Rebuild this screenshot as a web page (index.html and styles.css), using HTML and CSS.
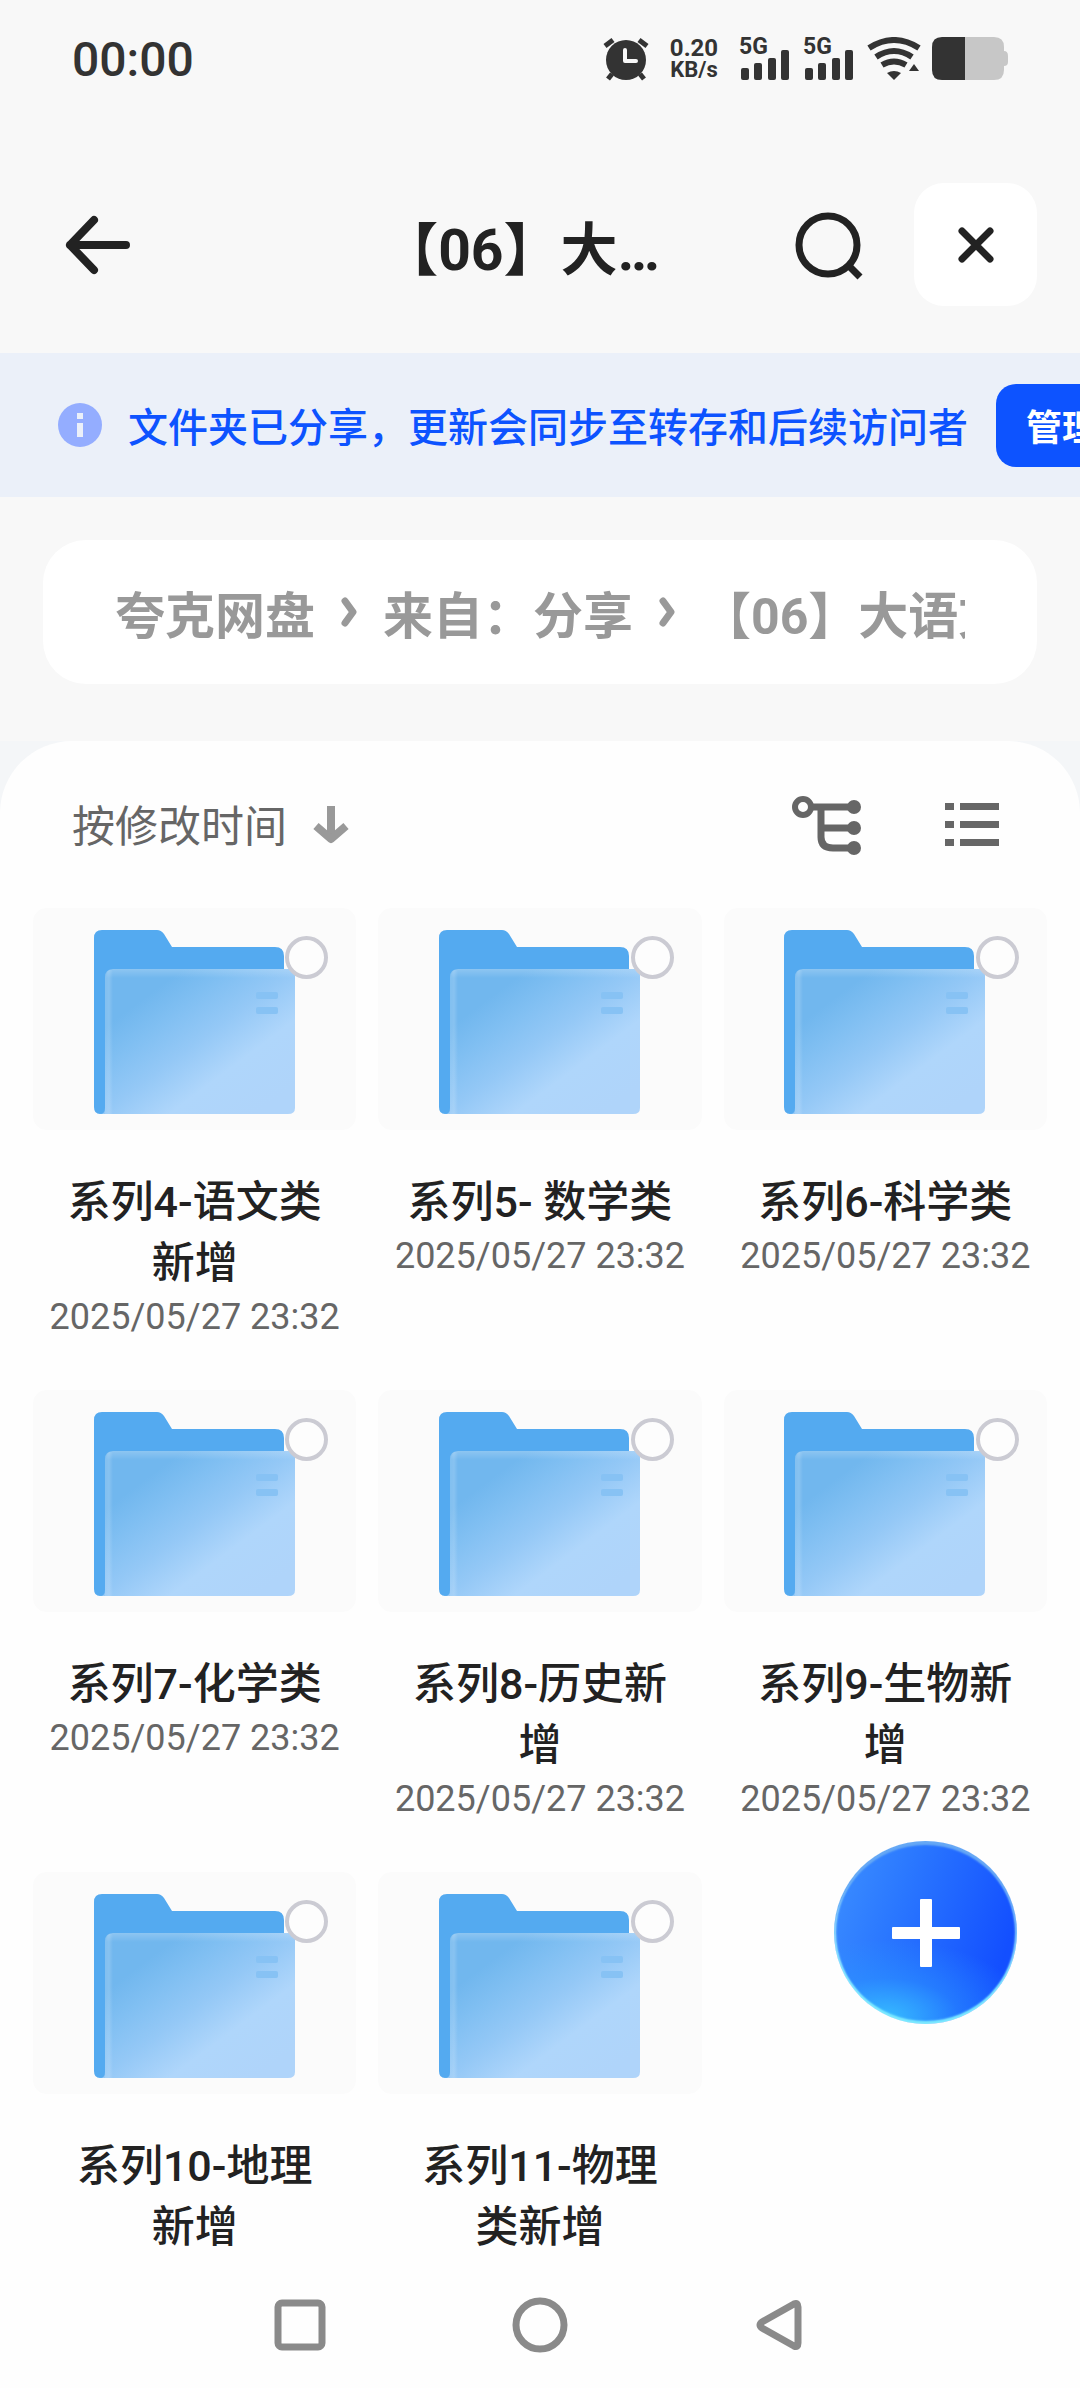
FILE: index.html
```html
<!DOCTYPE html>
<html lang="zh-CN">
<head>
<meta charset="utf-8">
<meta name="viewport" content="width=device-width, initial-scale=1">
<title>【06】大语文</title>
<link rel="stylesheet" href="styles.css">
</head>
<body>
<svg class="defs" aria-hidden="true">
  <defs>
    <linearGradient id="front" x1="0.1" y1="0.1" x2="0.9" y2="0.9">
      <stop offset="0.14" stop-color="#71b7ee"/>
      <stop offset="0.3" stop-color="#80bff2"/>
      <stop offset="0.5" stop-color="#94c8f6"/>
      <stop offset="0.72" stop-color="#afd6fb"/>
      <stop offset="1" stop-color="#afd4fa"/>
    </linearGradient>
    <linearGradient id="edge-x" x1="0" y1="0" x2="1" y2="0">
      <stop offset="0" stop-color="#fff" stop-opacity="0.12"/>
      <stop offset="0.5" stop-color="#fff" stop-opacity="0.16"/>
      <stop offset="1" stop-color="#fff" stop-opacity="0"/>
    </linearGradient>
    <linearGradient id="edge-y" x1="0" y1="0" x2="0" y2="1">
      <stop offset="0" stop-color="#fff" stop-opacity="0.2"/>
      <stop offset="1" stop-color="#fff" stop-opacity="0"/>
    </linearGradient>
    <symbol id="folder" viewBox="0 0 202 192">
      <path d="M0 9Q0 1 8 1H63Q67 1 70 5L78 18H181Q190 18 190 27V80H0Z" fill="#54aaf0"/>
      <path d="M19 40H201V179Q201 185 194 185H7V48Q11 40 19 40Z" fill="url(#front)"/>
      <path d="M11 48Q11 40 19 40V185H11Z" fill="url(#edge-x)"/>
      <path d="M19 40H201V49H12Q12 40 19 40Z" fill="url(#edge-y)"/>
      <path d="M0 40H19Q11 40 11 48V179Q11 185 6 185Q0 185 0 178Z" fill="#54aaf0"/>
      <rect x="162" y="63" width="22" height="7" rx="2" fill="#87c2f4"/>
      <rect x="162" y="78" width="22" height="7" rx="2" fill="#87c2f4"/>
    </symbol>
    <symbol id="chevron" viewBox="0 0 16 30">
      <path d="M4 4L12 15L4 26" fill="none" stroke="#999" stroke-width="7" stroke-linecap="round" stroke-linejoin="round"/>
    </symbol>
    <symbol id="signal" viewBox="0 0 50 32">
      <rect x="0" y="18" width="8" height="12" rx="2"/>
      <rect x="13" y="13" width="8" height="17" rx="2"/>
      <rect x="27" y="8" width="8" height="22" rx="2"/>
      <rect x="40" y="0" width="8" height="30" rx="2"/>
    </symbol>
  </defs>
</svg>
<div class="app">
  <div class="statusbar">
    <span class="clock">00:00</span>
    <svg class="alarm" width="46" height="44" viewBox="0 0 46 44" fill="#333">
      <circle cx="23" cy="23" r="20"/>
      <path d="M2 9L10 3M44 9L36 3" stroke="#333" stroke-width="5"/>
      <path d="M9 37L5 42M37 37L41 42" stroke="#333" stroke-width="5"/>
      <path d="M22 13V24H33" fill="none" stroke="#f8f8f8" stroke-width="4" stroke-linecap="round" stroke-linejoin="round"/>
    </svg>
    <span class="speed"><b>0.20</b><b class="unit">KB/s</b></span>
    <span class="cell"><b>5G</b><svg width="50" height="32"><use href="#signal"/></svg></span>
    <span class="cell"><b>5G</b><svg width="50" height="32"><use href="#signal"/></svg></span>
    <svg class="wifi" width="54" height="44" viewBox="0 0 54 44">
      <g fill="none" stroke="#333" stroke-width="6">
        <path d="M2 11Q27 -5 52 11"/>
        <path d="M9 20Q27 8 45 20"/>
        <path d="M15 28Q27 21 39 28"/>
      </g>
      <path d="M20 36Q27 32 34 36L27 43Z" fill="#333"/>
      <path d="M42 34L47 27L52 34Z" fill="#333"/>
    </svg>
    <svg class="battery" width="76" height="44" viewBox="0 0 76 44">
      <path d="M33 0H62Q72 0 72 10V14Q76 14 76 19V25Q76 29 72 29V33Q72 43 62 43H33Z" fill="#c7c7c7"/>
      <path d="M33 0H10Q0 0 0 10V33Q0 43 10 43H33Z" fill="#333"/>
    </svg>
  </div>

  <header class="header">
    <button class="icon-btn" aria-label="返回">
      <svg width="66" height="60" viewBox="0 0 66 60" fill="none" stroke="#222" stroke-width="8" stroke-linecap="round" stroke-linejoin="round"><path d="M29 5L5 30L29 55M5 30H61"/></svg>
    </button>
    <h1 class="title">【06】大…</h1>
    <button class="icon-btn" aria-label="搜索">
      <svg width="70" height="70" viewBox="0 0 70 70" fill="none" stroke="#222" stroke-width="7"><circle cx="34" cy="35" r="29"/><path d="M54 55L66 67"/></svg>
    </button>
    <button class="close" aria-label="关闭">
      <svg width="38" height="38" viewBox="0 0 38 38" fill="none" stroke="#222" stroke-width="7" stroke-linecap="round"><path d="M5 5L33 33M33 5L5 33"/></svg>
    </button>
  </header>

  <div class="banner">
    <svg class="info" width="44" height="44" viewBox="0 0 44 44"><circle cx="22" cy="22" r="22" fill="#94adff"/><path d="M19 10H25V16H19ZM19 20H25V34H19Z" fill="#ebf0f9"/></svg>
    <span class="banner-text">文件夹已分享，更新会同步至转存和后续访问者</span>
    <button class="manage">管理分享</button>
  </div>

  <nav class="crumbs" aria-label="路径">
    <div class="crumb-track">
      <a href="#">夸克网盘</a>
      <svg width="16" height="30"><use href="#chevron"/></svg>
      <a href="#">来自：分享</a>
      <svg width="16" height="30"><use href="#chevron"/></svg>
      <a href="#">【06】大语文</a>
    </div>
  </nav>

  <div class="backdrop">
  <main class="sheet">
    <div class="toolbar">
      <button class="sort">按修改时间
        <svg width="36" height="40" viewBox="0 0 36 40" fill="none" stroke="#999" stroke-width="8" stroke-linejoin="round"><path d="M18 1V34" /><path d="M3 21L18 34L33 21"/></svg>
      </button>
      <button class="icon-btn tree" aria-label="目录树">
        <svg width="70" height="60" viewBox="0 0 70 60" fill="none" stroke="#666" stroke-width="7"><circle cx="11" cy="12" r="8" stroke-width="6"/><path d="M20 12H62M29 12V42Q29 53 41 53H62M29 33H62"/><g fill="#666" stroke="none"><circle cx="62" cy="12" r="7"/><circle cx="62" cy="33" r="7"/><circle cx="62" cy="53" r="7"/></g></svg>
      </button>
      <button class="icon-btn" aria-label="列表视图">
        <svg width="54" height="44" viewBox="0 0 54 44" fill="#666"><path d="M0 0H9V7H0ZM15 0H54V7H15ZM0 18H9V25H0ZM15 18H54V25H15ZM0 36H9V43H0ZM15 36H54V43H15Z"/></svg>
      </button>
    </div>

    <ul class="grid">
      <li class="item"><div class="thumb"><svg class="folder"><use href="#folder"/></svg><input type="checkbox" aria-label="选择 系列4"></div><a class="name" href="#">系列4-语文类新增</a><time>2025/05/27 23:32</time></li>
      <li class="item"><div class="thumb"><svg class="folder"><use href="#folder"/></svg><input type="checkbox" aria-label="选择 系列5"></div><a class="name" href="#">系列5- 数学类</a><time>2025/05/27 23:32</time></li>
      <li class="item"><div class="thumb"><svg class="folder"><use href="#folder"/></svg><input type="checkbox" aria-label="选择 系列6"></div><a class="name" href="#">系列6-科学类</a><time>2025/05/27 23:32</time></li>
      <li class="item"><div class="thumb"><svg class="folder"><use href="#folder"/></svg><input type="checkbox" aria-label="选择 系列7"></div><a class="name" href="#">系列7-化学类</a><time>2025/05/27 23:32</time></li>
      <li class="item"><div class="thumb"><svg class="folder"><use href="#folder"/></svg><input type="checkbox" aria-label="选择 系列8"></div><a class="name" href="#">系列8-历史新增</a><time>2025/05/27 23:32</time></li>
      <li class="item"><div class="thumb"><svg class="folder"><use href="#folder"/></svg><input type="checkbox" aria-label="选择 系列9"></div><a class="name" href="#">系列9-生物新增</a><time>2025/05/27 23:32</time></li>
      <li class="item"><div class="thumb"><svg class="folder"><use href="#folder"/></svg><input type="checkbox" aria-label="选择 系列10"></div><a class="name" href="#">系列10-地理新增</a></li>
      <li class="item"><div class="thumb"><svg class="folder"><use href="#folder"/></svg><input type="checkbox" aria-label="选择 系列11"></div><a class="name" href="#">系列11-物理类新增</a></li>
    </ul>
  </main>
  </div>

  <footer class="navbar">
    <button class="icon-btn" aria-label="最近任务"><svg width="56" height="56" viewBox="0 0 56 56" fill="none" stroke="#8a8a8a" stroke-width="7"><rect x="6" y="6" width="44" height="44" rx="4"/></svg></button>
    <button class="icon-btn" aria-label="主页"><svg width="56" height="56" viewBox="0 0 56 56" fill="none" stroke="#8a8a8a" stroke-width="7"><circle cx="28" cy="28" r="24"/></svg></button>
    <button class="icon-btn" aria-label="返回"><svg width="56" height="56" viewBox="0 0 56 56" fill="none" stroke="#8a8a8a" stroke-width="7" stroke-linejoin="round"><path d="M42 7Q46 5 46 10V46Q46 51 42 49L10 31Q6 28 10 25Z"/></svg></button>
  </footer>

  <button class="fab" aria-label="新建"><svg width="68" height="68" viewBox="0 0 68 68" fill="#fff"><rect x="28" y="0" width="12" height="68" rx="1"/><rect x="0" y="28" width="68" height="12" rx="1"/></svg></button>
</div>
</body>
</html>
```

FILE: styles.css
```css
* { box-sizing: border-box; }

body {
  margin: 0;
  background: #f8f8f8;
  color: #222;
  font-family: Roboto, "Noto Sans CJK SC", sans-serif;
}

button {
  padding: 0;
  border: 0;
  background: none;
  color: inherit;
  font: inherit;
}

a { color: inherit; text-decoration: none; }
svg { display: block; flex: none; }
.defs { position: absolute; width: 0; height: 0; }

.app {
  position: relative;
  display: flex;
  flex-direction: column;
  height: 100vh;
  overflow: hidden;
}

/* status bar */
.statusbar {
  flex: none;
  display: flex;
  align-items: center;
  height: 118px;
  padding: 0 72px;
  color: #333;
}
.clock { margin-right: auto; font-size: 48px; font-weight: 500; }
.alarm { margin-right: 20px; }
.speed {
  display: flex;
  flex-direction: column;
  align-items: center;
  width: 50px;
  margin-right: 20px;
  font-size: 24px;
  line-height: 22px;
}
.speed b { font-weight: 700; }
.speed .unit { font-size: 22px; }
.cell { width: 64px; height: 44px; }
.cell b { display: block; height: 13px; font-size: 23px; line-height: 20px; }
.cell svg { margin-left: 2px; fill: #333; }
.wifi { margin-right: 11px; }

/* title bar */
.header {
  flex: none;
  display: flex;
  align-items: center;
  height: 235px;
  padding: 18px 43px 0 65px;
}
.title {
  flex: 1;
  margin: 0;
  padding: 12px 0 0 116px;
  font-size: 57px;
  font-weight: 700;
  line-height: 80px;
  text-align: center;
  white-space: nowrap;
}
.close {
  display: grid;
  place-items: center;
  width: 123px;
  height: 123px;
  margin-left: 50px;
  border-radius: 30px;
  background: #fff;
}

/* share notice */
.banner {
  flex: none;
  display: flex;
  align-items: center;
  height: 144px;
  padding-left: 58px;
  overflow: hidden;
  background: #ebf0f9;
  white-space: nowrap;
}
.banner-text {
  margin: 0 28px 0 26px;
  color: #0d53ff;
  font-size: 40px;
  font-weight: 500;
}
.manage {
  flex: none;
  height: 83px;
  padding: 0 30px;
  border-radius: 20px;
  background: #0d53ff;
  color: #fff;
  font-size: 36px;
  font-weight: 700;
}

/* path */
.crumbs {
  flex: none;
  height: 144px;
  margin: 43px 43px 57px;
  padding: 0 72px;
  border-radius: 43px;
  background: #fff;
}
.crumb-track {
  display: flex;
  align-items: center;
  gap: 26px;
  height: 100%;
  overflow: hidden;
  color: #999;
  font-size: 50px;
  font-weight: 700;
  white-space: nowrap;
}

/* file sheet */
.backdrop {
  flex: 1;
  min-height: 0;
  overflow: hidden;
  background: #f4f6f8;
}
.sheet {
  min-height: 100%;
  border-radius: 72px 72px 0 0;
  background: #fefefe;
}
.toolbar {
  display: flex;
  align-items: center;
  height: 167px;
  padding: 0 81px 0 72px;
}
.sort {
  display: flex;
  align-items: center;
  gap: 26px;
  margin-right: auto;
  padding-bottom: 4px;
  color: #666;
  font-size: 43px;
}
.sort svg { margin-top: 4px; }
.tree { margin-right: 83px; }

.grid {
  display: grid;
  grid-template-columns: repeat(3, 1fr);
  gap: 50px 22px;
  margin: 0;
  padding: 0 33px;
  list-style: none;
}
.item {
  display: flex;
  flex-direction: column;
  align-items: center;
  text-align: center;
}
.thumb {
  position: relative;
  display: flex;
  justify-content: center;
  width: 100%;
  height: 222px;
  margin-bottom: 42px;
  padding-top: 21px;
  border-radius: 14px;
  background: #fbfbfb;
}
.folder { width: 202px; height: 192px; }
.thumb input {
  position: absolute;
  top: 28px;
  right: 28px;
  width: 43px;
  height: 43px;
  margin: 0;
  appearance: none;
  border: 4px solid #cbcbd3;
  border-radius: 50%;
  background: #fdfdfd;
}
.name {
  width: 100%;
  padding: 0 26px;
  font-size: 43px;
  font-weight: 500;
  line-height: 61px;
}
.item time {
  color: #666;
  font-size: 36px;
  line-height: 46px;
  white-space: nowrap;
}

/* floating add button */
.fab {
  position: absolute;
  right: 63px;
  bottom: 364px;
  display: grid;
  place-items: center;
  width: 183px;
  height: 183px;
  border-radius: 50%;
  background:
    radial-gradient(ellipse 80% 42% at 28% 96%, #36baff 0, rgba(44, 150, 255, 0.5) 50%, rgba(40, 130, 255, 0) 100%),
    linear-gradient(110deg, #3b8dff 5%, #2a77ff 35%, #134fff 85%);
  box-shadow: inset 0 4px 2px #66a8f5, inset 0 -3px 2px #7deaff, inset 2px 0 2px #9be4ff, inset -2px 0 2px #7dbcff;
}

/* system navigation */
.navbar {
  flex: none;
  display: flex;
  align-items: center;
  justify-content: center;
  gap: 184px;
  height: 126px;
  background: #fefefe;
}
```
